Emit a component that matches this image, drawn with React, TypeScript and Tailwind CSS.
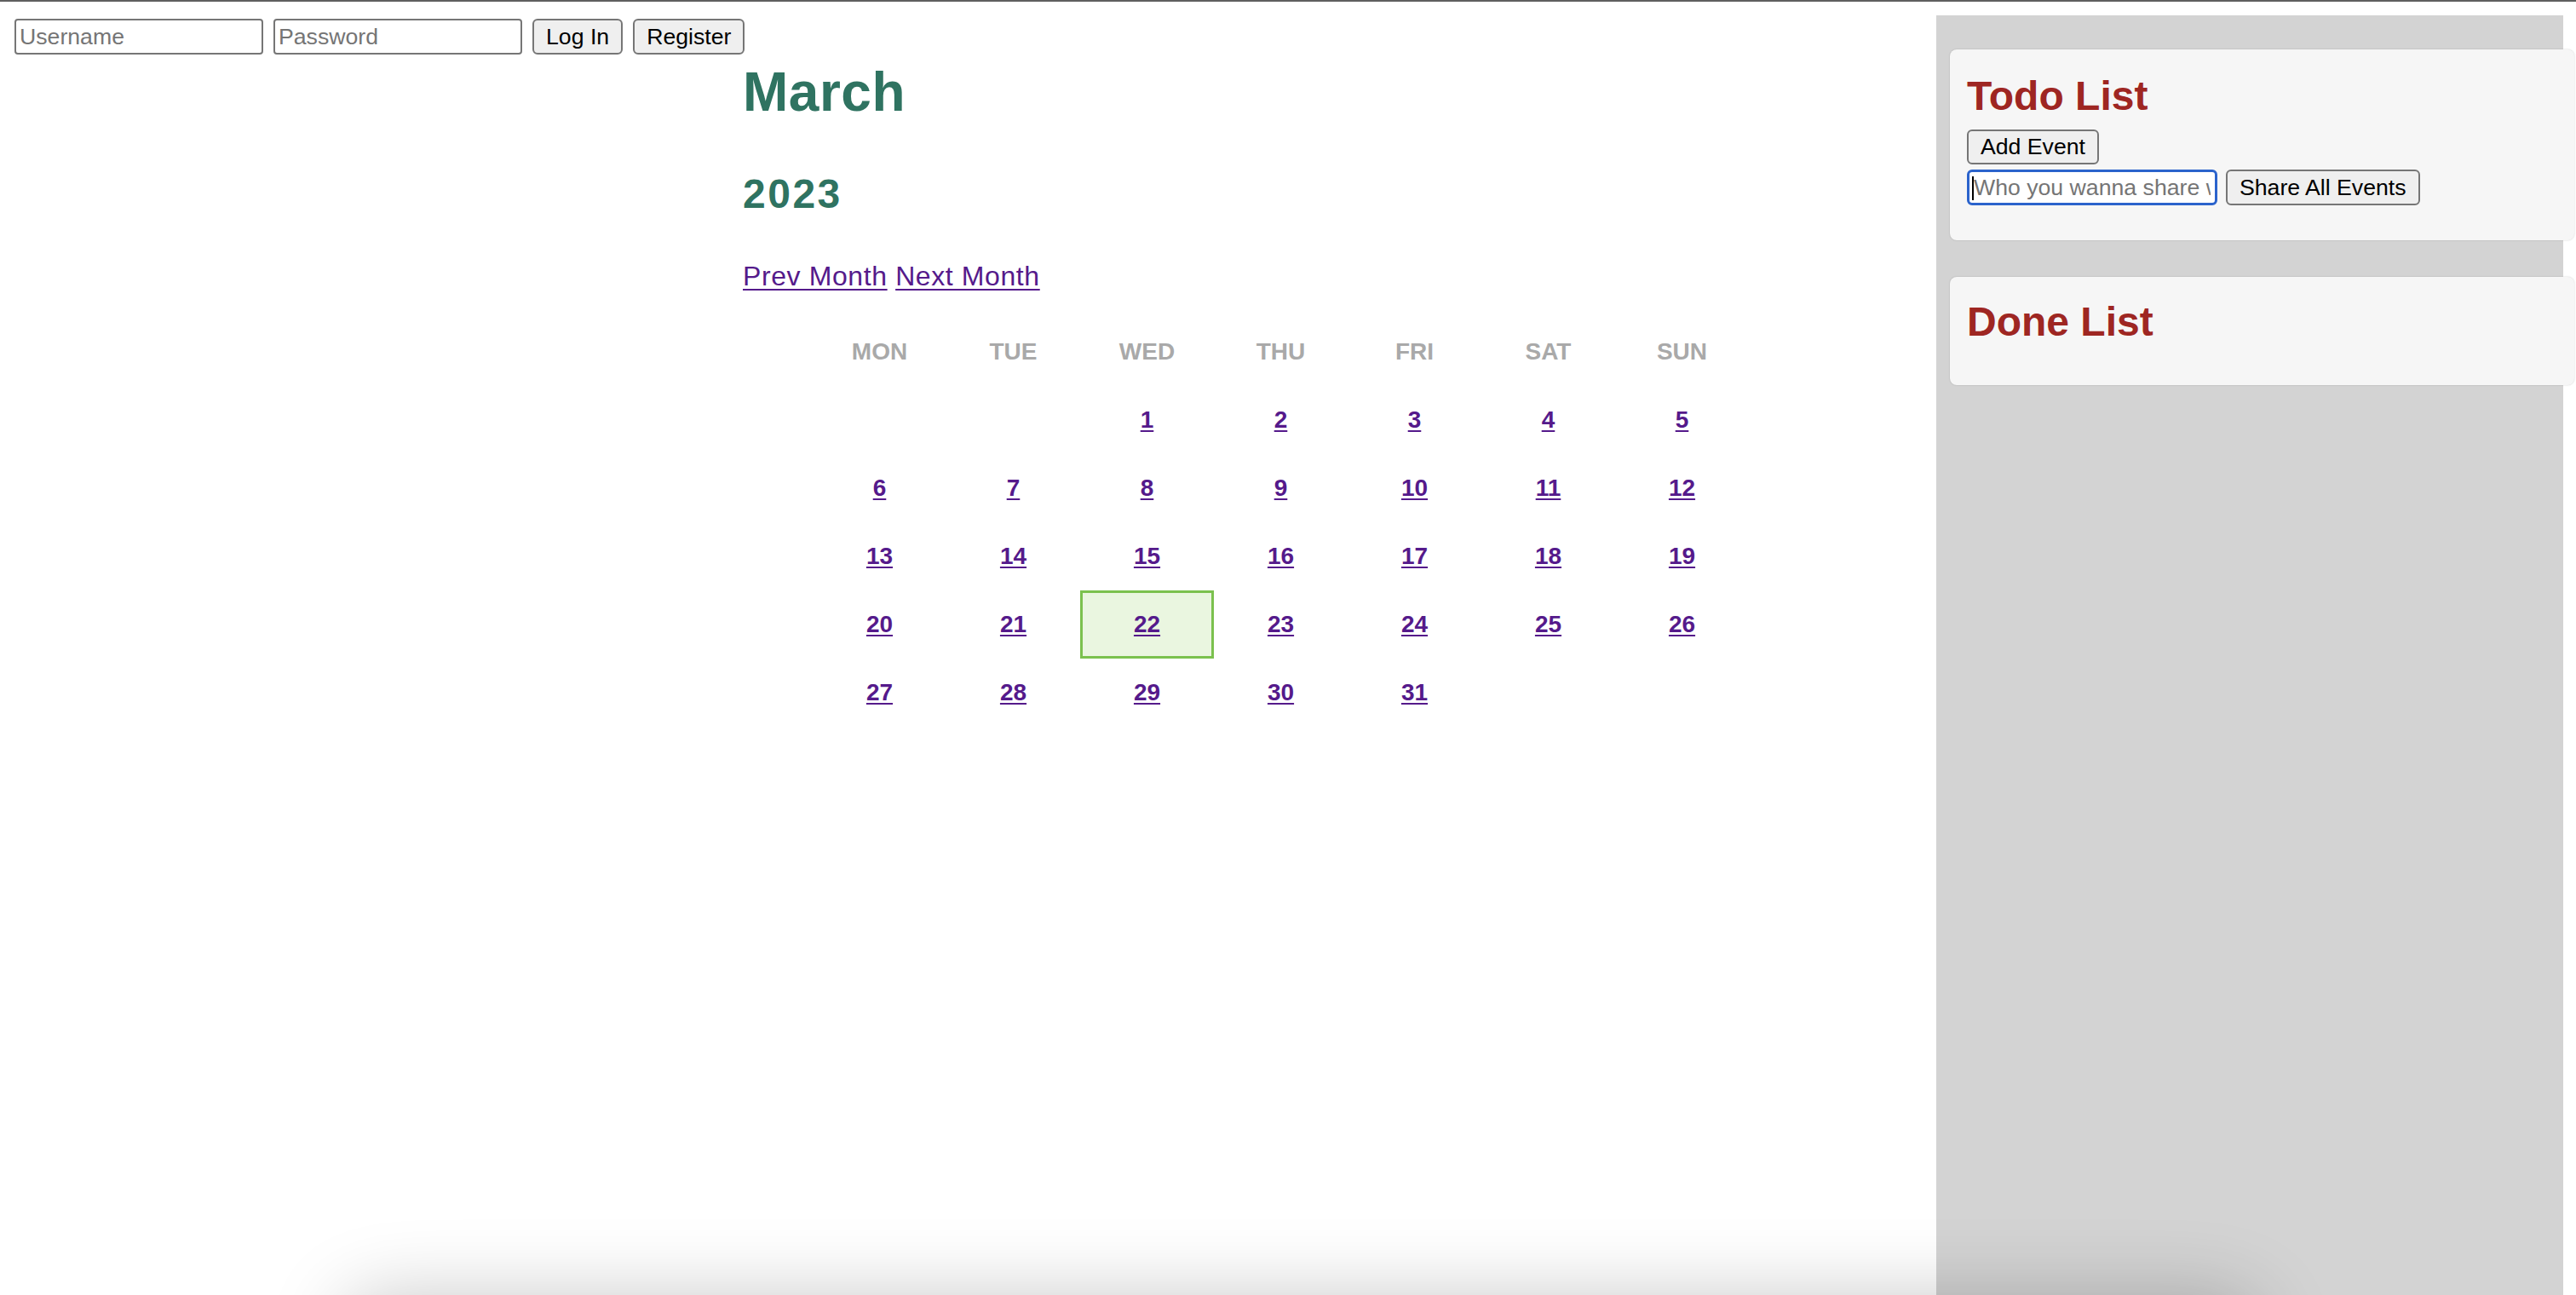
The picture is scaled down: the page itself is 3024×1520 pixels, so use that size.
import React from "react";

const weeks: (number | null)[][] = [
  [null, null, 1, 2, 3, 4, 5],
  [6, 7, 8, 9, 10, 11, 12],
  [13, 14, 15, 16, 17, 18, 19],
  [20, 21, 22, 23, 24, 25, 26],
  [27, 28, 29, 30, 31, null, null],
];

const dayNames = ["MON", "TUE", "WED", "THU", "FRI", "SAT", "SUN"];

function Btn({ children, className = "" }: { children: React.ReactNode; className?: string }) {
  return (
    <button
      className={
        "box-border rounded-[6px] border-2 border-[#767676] bg-[#efefef] px-[14px] text-[26.67px] leading-none text-black " +
        className
      }
    >
      {children}
    </button>
  );
}

export default function App() {
  return (
    <div className="relative box-border h-[1520px] w-[3024px] overflow-hidden border-t-2 border-[#5f5f5f] bg-white font-['Liberation_Sans',Arial,sans-serif]">
      <div className="flex h-full">
        {/* Left / main column */}
        <div className="flex-1 pl-[17px] pt-[20px]">
          <div className="flex gap-[12px]">
            <input
              placeholder="Username"
              className="box-border h-[42px] w-[292px] rounded-[4px] border-2 border-[#767676] px-[4px] text-[26.67px] placeholder:text-[#757575] outline-none"
            />
            <input
              placeholder="Password"
              type="password"
              className="box-border h-[42px] w-[292px] rounded-[4px] border-2 border-[#767676] px-[4px] text-[26.67px] placeholder:text-[#757575] outline-none"
            />
            <Btn className="h-[42px]">Log In</Btn>
            <Btn className="h-[42px]">Register</Btn>
          </div>

          <div className="ml-[855px]">
            <h1 className="mt-[12px] text-[64px] font-bold leading-[64px] tracking-[0.5px] text-[#2f7361]">March</h1>
            <h2 className="mt-[64px] text-[48px] font-bold leading-[48px] tracking-[2.5px] text-[#2f7361]">2023</h2>
            <div className="mt-[56px] text-[32px] leading-[32px] tracking-[0.6px]">
              <a href="#" className="text-[#551a8b] underline decoration-2 underline-offset-[4px]">
                Prev Month
              </a>{" "}
              <a href="#" className="text-[#551a8b] underline decoration-2 underline-offset-[4px]">
                Next Month
              </a>
            </div>

            <div className="ml-[82px] mt-[33px] grid grid-cols-[repeat(7,157px)] auto-rows-[80px]">
              {dayNames.map((d) => (
                <div
                  key={d}
                  className="flex items-center justify-center text-[28px] font-bold leading-[28px] text-[#a9a9a9]"
                >
                  {d}
                </div>
              ))}
              {weeks.flat().map((d, i) =>
                d === null ? (
                  <div key={"e" + i} />
                ) : d === 22 ? (
                  <div
                    key={d}
                    className="box-border flex items-center justify-center border-[3px] border-[#7bc14e] bg-[#eaf6e0]"
                  >
                    <a
                      href="#"
                      className="text-[28px] font-bold leading-[28px] text-[#551a8b] underline decoration-2 underline-offset-[3px]"
                    >
                      {d}
                    </a>
                  </div>
                ) : (
                  <div key={d} className="flex items-center justify-center">
                    <a
                      href="#"
                      className="text-[28px] font-bold leading-[28px] text-[#551a8b] underline decoration-2 underline-offset-[3px]"
                    >
                      {d}
                    </a>
                  </div>
                )
              )}
            </div>
          </div>
        </div>

        {/* Sidebar */}
        <div className="mr-[15px] mt-[16px] w-[736px] shrink-0 bg-[#d3d3d3] pt-[40px]">
          <div className="ml-[16px] w-[733px] rounded-[8px] bg-[#f6f6f6] px-[20px] pb-[41px] pt-[31px] shadow-[0_0_2px_rgba(0,0,0,0.2)]">
            <h2 className="text-[48px] font-bold leading-[48px] text-[#9e2622]">Todo List</h2>
            <div className="mt-[15px]">
              <Btn className="h-[41px]">Add Event</Btn>
            </div>
            <div className="mt-[6px] flex items-center gap-[10px]">
              <div className="relative">
                <input
                  placeholder="Who you wanna share with?"
                  className="box-border h-[42px] w-[294px] rounded-[6px] border-[3px] border-[#2b63cc] bg-white px-[5px] text-[26.67px] placeholder:text-[#757575] outline-none"
                />
                <span className="absolute left-[6px] top-[8px] h-[28px] w-[2px] bg-black" />
              </div>
              <Btn className="h-[42px]">Share All Events</Btn>
            </div>
          </div>

          <div className="ml-[16px] mt-[43px] w-[733px] rounded-[8px] bg-[#f6f6f6] px-[20px] pb-[50px] pt-[29px] shadow-[0_0_2px_rgba(0,0,0,0.2)]">
            <h2 className="text-[48px] font-bold leading-[48px] text-[#9e2622]">Done List</h2>
          </div>
        </div>
      </div>

      {/* bottom shadow overlay */}
      <div className="pointer-events-none absolute left-[420px] right-[390px] top-[1540px] h-[60px] rounded-[40px] shadow-[0_0_90px_20px_rgba(0,0,0,0.22)]" />
    </div>
  );
}
